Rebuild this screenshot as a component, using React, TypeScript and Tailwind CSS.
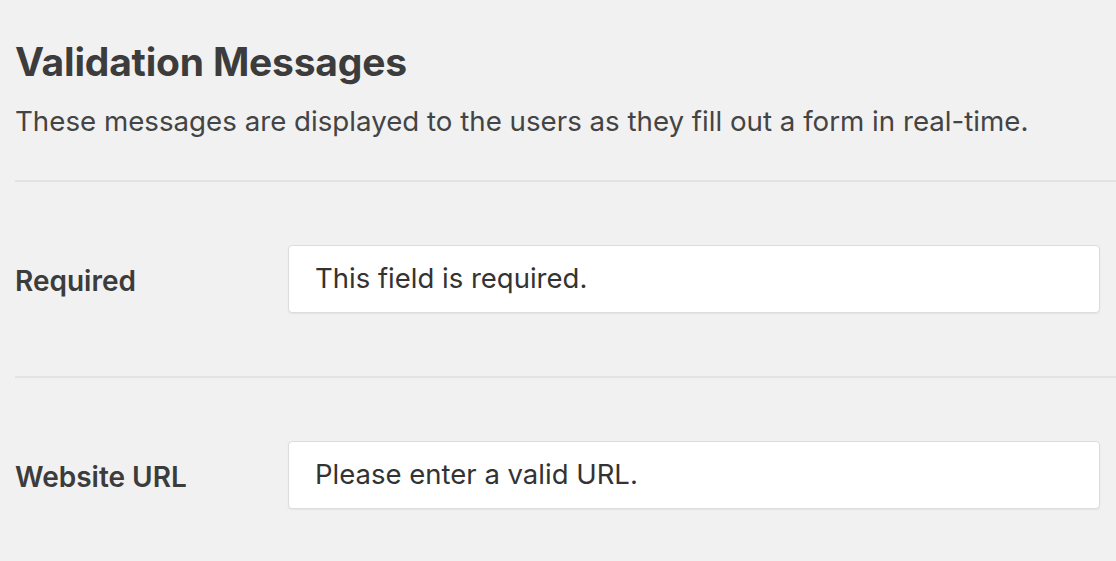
import React from "react";

const rows = [
  { label: "Required", value: "This field is required." },
  { label: "Website URL", value: "Please enter a valid URL." },
];

export default function App() {
  return (
    <div
      className="min-h-[561px] w-full overflow-hidden bg-[#f1f1f1] pl-[15px] text-[#3c3c3c]"
      style={{ fontFamily: "Inter, 'Liberation Sans', sans-serif" }}
    >
      <h2 className="pt-[39px] text-[39px] font-bold leading-[46px] tracking-[-0.2px]">
        Validation Messages
      </h2>
      <p className="mt-[18px] text-[27.7px] leading-[36px] text-[#444]">
        These messages are displayed to the users as they fill out a form in real-time.
      </p>

      <div className="mt-[41px] border-t-2 border-[#e3e3e3]">
        {rows.map((row, i) => (
          <div
            key={row.label}
            className={
              i > 0
                ? "flex items-center border-t-2 border-[#e3e3e3] py-[63px] pr-[16px]"
                : "flex items-center py-[63px] pr-[16px]"
            }
          >
            <label className="w-[273px] shrink-0 pt-[4px] text-[28px] font-semibold">
              {row.label}
            </label>
            <div className="flex h-[68px] flex-1 items-center rounded-[4px] border border-[#dcdcdc] bg-white pl-[26px] text-[27.5px] text-[#333] shadow-[0_1px_2px_rgba(0,0,0,0.06)]">
              {row.value}
            </div>
          </div>
        ))}
      </div>
    </div>
  );
}
